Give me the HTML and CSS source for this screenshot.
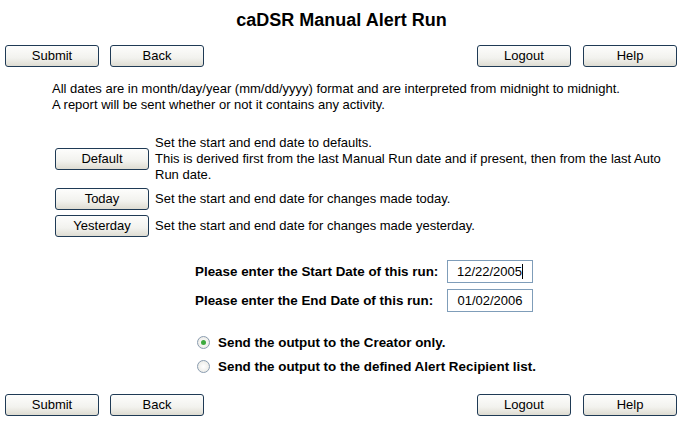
FILE: index.html
```html
<!DOCTYPE html>
<html>
<head>
<meta charset="utf-8">
<title>caDSR Manual Alert Run</title>
<link rel="stylesheet" href="styles.css">
</head>
<body>
<h1 class="title">caDSR Manual Alert Run</h1>
<div class="toolbar toolbar-top">
  <div class="group">
    <button class="btn">Submit</button>
    <button class="btn">Back</button>
  </div>
  <div class="group group-right">
    <button class="btn">Logout</button>
    <button class="btn">Help</button>
  </div>
</div>
<p class="info">All dates are in month/day/year (mm/dd/yyyy) format and are interpreted from midnight to midnight.<br>A report will be sent whether or not it contains any activity.</p>
<div class="options">
  <div class="opt">
    <button class="btn">Default</button>
    <div class="desc">Set the start and end date to defaults.<br>This is derived first from the last Manual Run date and if present, then from the last Auto Run date.</div>
  </div>
  <div class="opt">
    <button class="btn">Today</button>
    <div class="desc">Set the start and end date for changes made today.</div>
  </div>
  <div class="opt">
    <button class="btn">Yesterday</button>
    <div class="desc">Set the start and end date for changes made yesterday.</div>
  </div>
</div>
<div class="dates">
  <label class="dlabel">Please enter the Start Date of this run:</label>
  <div class="dinput caret">12/22/2005</div>
  <label class="dlabel">Please enter the End Date of this run:</label>
  <div class="dinput">01/02/2006</div>
</div>
<div class="radios">
  <div class="radio-row"><span class="radio checked"></span><span class="rlabel">Send the output to the Creator only.</span></div>
  <div class="radio-row"><span class="radio"></span><span class="rlabel">Send the output to the defined Alert Recipient list.</span></div>
</div>
<div class="toolbar toolbar-bottom">
  <div class="group">
    <button class="btn">Submit</button>
    <button class="btn">Back</button>
  </div>
  <div class="group group-right">
    <button class="btn">Logout</button>
    <button class="btn">Help</button>
  </div>
</div>
</body>
</html>
```
FILE: styles.css
```css
html, body {
  margin: 0;
  padding: 0;
  background: #ffffff;
  font-family: "Liberation Sans", Arial, sans-serif;
  color: #000;
}
.title {
  margin: 9px 0 0 0;
  font-size: 18px;
  line-height: 22px;
  font-weight: bold;
  text-align: center;
}
.toolbar {
  display: flex;
  justify-content: space-between;
  padding: 0 6px 0 5px;
}
.toolbar-top { margin-top: 14px; }
.toolbar-bottom { margin-top: 20px; }
.group {
  display: flex;
  gap: 11px;
}
.group-right { gap: 12px; }
.btn {
  width: 94px;
  height: 22px;
  margin: 0;
  padding: 0;
  border: 1px solid #1f3a55;
  border-radius: 3px;
  background: linear-gradient(#fdfdfc, #f2f2ee 60%, #dedcd2);
  font-family: "Liberation Sans", Arial, sans-serif;
  font-size: 13px;
  color: #000;
  line-height: 20px;
}
.info {
  margin: 14px 0 0 52px;
  font-size: 13px;
  line-height: 16px;
}
.options {
  margin: 22px 0 0 55px;
  display: flex;
  flex-direction: column;
  gap: 5px;
}
.opt {
  display: flex;
  align-items: center;
  gap: 6px;
}
.desc {
  font-size: 13px;
  line-height: 16px;
  width: 515px;
}
.dates {
  margin: 23px 0 0 195px;
  display: grid;
  grid-template-columns: 252px 86px;
  row-gap: 6px;
  align-items: center;
}
.dlabel {
  font-size: 13.4px;
  font-weight: bold;
}
.dinput {
  height: 21px;
  border: 1px solid #7f9db9;
  font-size: 13px;
  line-height: 21px;
  text-align: center;
  box-sizing: content-box;
  width: 84px;
}
.caret::after {
  content: "";
  display: inline-block;
  width: 1px;
  height: 15px;
  background: #000;
  vertical-align: -3px;
}
.radios {
  margin: 22px 0 0 197px;
  display: flex;
  flex-direction: column;
  gap: 8px;
}
.radio-row {
  display: flex;
  align-items: center;
  gap: 8px;
  height: 16px;
}
.radio {
  width: 11px;
  height: 11px;
  border: 1px solid #8a9cb0;
  border-radius: 50%;
  background: radial-gradient(#ffffff, #e6e6e0);
  position: relative;
}
.radio.checked::after {
  content: "";
  position: absolute;
  left: 3px;
  top: 3px;
  width: 5px;
  height: 5px;
  border-radius: 50%;
  background: #3eaa3e;
}
.rlabel {
  font-size: 13.4px;
  font-weight: bold;
}
```
